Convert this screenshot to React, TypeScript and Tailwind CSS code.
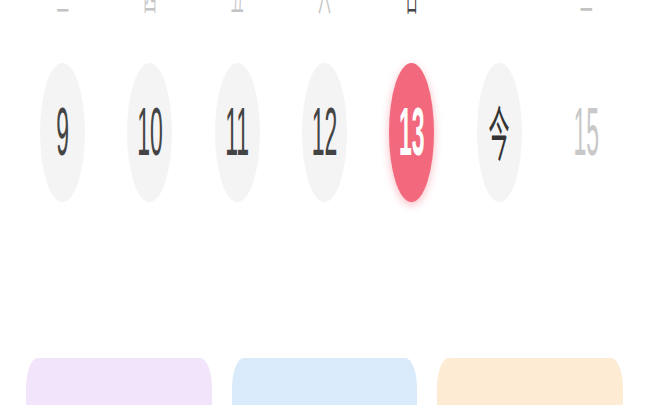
import React from "react";

const labels = ["三", "四", "五", "六", "日", "一", "二"];

export default function App() {
  const days = [
    { t: "9", kind: "pill" },
    { t: "10", kind: "pill" },
    { t: "11", kind: "pill" },
    { t: "12", kind: "pill" },
    { t: "13", kind: "sel" },
    { t: "今", kind: "today" },
    { t: "15", kind: "none" },
  ];
  return (
    <div className="h-[405px] w-[649px] overflow-hidden bg-white" style={{ fontFamily: '"Liberation Sans", "Noto Sans CJK SC", sans-serif' }}>
      <div className="grid grid-cols-7 px-[19px] h-[14px]">
        {labels.map((l, i) => (
          <div key={i} className="flex items-end justify-center h-[14px]">
            <span
              className={`inline-block origin-bottom scale-y-[2.6] text-[13px] leading-none ${i === 4 ? "text-[#444]" : "text-[#c4c4c4]"}`}
              style={{ fontFamily: '"Noto Sans CJK SC", sans-serif' }}
            >
              {l}
            </span>
          </div>
        ))}
      </div>
      <div className="grid grid-cols-7 px-[19px] mt-[49px]">
        {days.map((d, i) => (
          <div key={i} className="flex justify-center">
            {d.kind === "sel" ? (
              <div className="w-[45px] h-[139px] rounded-[50%] bg-[#f2687c] shadow-[0_3px_8px_rgba(242,104,124,0.45)] flex items-center justify-center">
                <span className="inline-block scale-y-[3] text-[23px] leading-none text-white font-bold">{d.t}</span>
              </div>
            ) : d.kind === "none" ? (
              <div className="w-[45px] h-[139px] flex items-center justify-center">
                <span className="inline-block scale-y-[3] text-[23px] leading-none text-[#c8c8c8]">{d.t}</span>
              </div>
            ) : d.kind === "today" ? (
              <div className="w-[45px] h-[139px] rounded-[50%] bg-[#f4f4f4] flex items-center justify-center">
                <span className="inline-block scale-y-[2.8] text-[21px] leading-none text-[#333]" style={{ fontFamily: '"Noto Sans CJK SC", sans-serif' }}>{d.t}</span>
              </div>
            ) : (
              <div className="w-[45px] h-[139px] rounded-[50%] bg-[#f4f4f4] flex items-center justify-center">
                <span className="inline-block scale-y-[3] text-[23px] leading-none text-[#444]">{d.t}</span>
              </div>
            )}
          </div>
        ))}
      </div>
      <div className="grid grid-cols-3 gap-[20px] px-[26px] mt-[156px]">
        <div className="h-[60px] bg-[#f2e4fb] rounded-tl-[12px_30px] rounded-tr-[12px_30px]" />
        <div className="h-[60px] bg-[#d9ebfb] rounded-tl-[12px_30px] rounded-tr-[12px_30px]" />
        <div className="h-[60px] bg-[#fdebd3] rounded-tl-[12px_30px] rounded-tr-[12px_30px]" />
      </div>
    </div>
  );
}
